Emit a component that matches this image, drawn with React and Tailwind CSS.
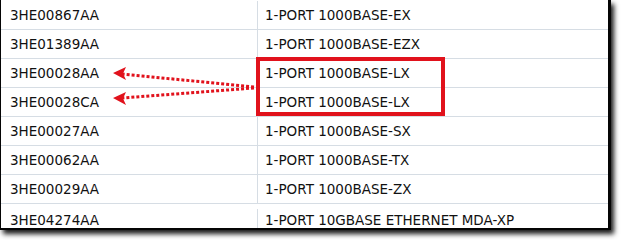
import React from "react";

const rows = [
  ["3HE00867AA", "1-PORT 1000BASE-EX"],
  ["3HE01389AA", "1-PORT 1000BASE-EZX"],
  ["3HE00028AA", "1-PORT 1000BASE-LX"],
  ["3HE00028CA", "1-PORT 1000BASE-LX"],
  ["3HE00027AA", "1-PORT 1000BASE-SX"],
  ["3HE00062AA", "1-PORT 1000BASE-TX"],
  ["3HE00029AA", "1-PORT 1000BASE-ZX"],
  ["3HE04274AA", "1-PORT 10GBASE ETHERNET MDA-XP"],
];

export default function App() {
  return (
    <div className="relative w-[622px] h-[240px] bg-white overflow-hidden" style={{ fontFamily: '"DejaVu Sans", Verdana, sans-serif' }}>
      <div className="w-[611px] h-[230px] border-l border-r-[3px] border-b-[2px] border-[#050505] bg-white pt-[1px] shadow-[3px_4px_5px_rgba(0,0,0,0.9)] overflow-hidden">
        {rows.map((r, i) => {
          const last = i === rows.length - 1;
          return (
            <div
              key={i}
              className={
                "flex text-[13.5px] text-[#111111] " +
                (last ? "h-[27px] items-start pt-[5px]" : "h-[29px] items-center border-b border-[#d6dde4]")
              }
            >
              <div className="w-[257px] pl-[9px] self-stretch flex items-center border-r border-[#d6dde4]">{r[0]}</div>
              <div className="pl-[7px] self-stretch flex items-center">{r[1]}</div>
            </div>
          );
        })}
      </div>
      <div className="absolute left-[256px] top-[57px] w-[189px] h-[59px] border-[4px] border-[#e1121c]" />
      <svg className="absolute left-0 top-0" width="622" height="240" viewBox="0 0 622 240">
        <line x1="254" y1="87" x2="122" y2="74" stroke="#e1121c" strokeWidth="3" strokeDasharray="3 2" />
        <line x1="254" y1="88" x2="122" y2="98" stroke="#e1121c" strokeWidth="3" strokeDasharray="3 2" />
        <polygon points="113,73 126,67 123,73.5 126,80" fill="#e1121c" />
        <polygon points="113,98 126,92 123,98.5 126,105" fill="#e1121c" />
      </svg>
    </div>
  );
}
